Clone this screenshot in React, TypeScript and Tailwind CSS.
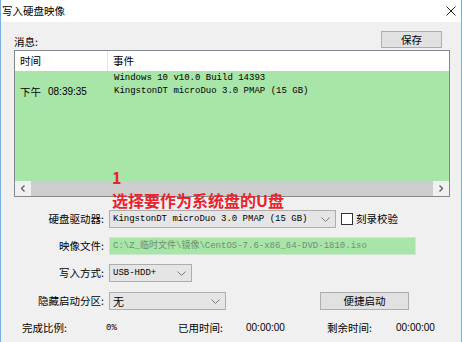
import React from "react";

const Chevron = () => (
  <svg width="9" height="5" viewBox="0 0 9 5" className="shrink-0">
    <path d="M0.5 0.5 L4.5 4.5 L8.5 0.5" fill="none" stroke="#7a7a7a" strokeWidth="1" />
  </svg>
);

function Select({ width, text, mono = true }: { width: string; text: string; mono?: boolean }) {
  return (
    <div
      className={`${width} h-[18px] flex items-center justify-between pl-[3px] pr-[5px] bg-[#e5e5e5] border border-[#adadad]`}
    >
      <span
        className={
          mono
            ? "font-['Liberation_Mono','Noto_Sans_CJK_SC',monospace] text-[9px] text-black whitespace-nowrap"
            : "text-[11px] text-black"
        }
      >
        {text}
      </span>
      <Chevron />
    </div>
  );
}

export default function App() {
  return (
    <div className="w-[462px] h-[342px] flex flex-col bg-[#f0f0f0] border-x border-[#7aaedc] font-['Noto_Sans_CJK_SC',sans-serif] text-[10.5px] leading-[14px] text-black overflow-hidden">
      {/* title bar */}
      <div className="h-[22px] shrink-0 bg-white flex items-center justify-between pl-[1px] pr-[5px]">
        <span className="text-[10.5px]">写入硬盘映像</span>
        <svg width="10" height="10" viewBox="0 0 10 10">
          <path d="M0.5 0.5 L9.5 9.5 M9.5 0.5 L0.5 9.5" stroke="#222" strokeWidth="1" />
        </svg>
      </div>

      {/* body */}
      <div className="relative flex-1 flex flex-col">
        <div className="h-[19px] mt-[9px] ml-[13px] mr-[19px] flex justify-between">
          <span className="self-end pb-[1px]">消息:</span>
          <button className="w-[61px] h-[17px] bg-[#e1e1e1] border border-[#adadad] text-[10.5px] leading-[14px]">
            保存
          </button>
        </div>

        {/* list */}
        <div className="ml-[13px] w-[436px] h-[147px] border border-[#828790] bg-white flex flex-col">
          <div className="h-[20px] flex items-center shrink-0">
            <div className="w-[93px] h-full flex items-center pl-[5px] border-r border-[#e5e5e5]">时间</div>
            <div className="pl-[5px]">事件</div>
          </div>
          <div className="flex-1 bg-[#a8e5a8] flex pt-[1px]">
            <div className="w-[93px] pl-[5px] pt-[13px] h-[26px] flex items-center">
              <span>下午</span>
              <span className="ml-[7px] font-['Liberation_Sans',sans-serif] text-[10px]">08:39:35</span>
            </div>
            <div className="pl-[6px] font-['Liberation_Mono',monospace] text-[9px] leading-[13px] flex flex-col">
              <span>Windows 10 v10.0 Build 14393</span>
              <span>KingstonDT microDuo 3.0 PMAP (15 GB)</span>
            </div>
          </div>
          <div className="h-[15px] shrink-0 flex">
            <div className="w-[16px] bg-[#f0f0f0] flex items-center justify-center">
              <svg width="4" height="7" viewBox="0 0 4 7">
                <path d="M3.5 0.5 L0.5 3.5 L3.5 6.5" fill="none" stroke="#606060" strokeWidth="1.3" />
              </svg>
            </div>
            <div className="flex-1 bg-[#cdcdcd]" />
            <div className="w-[16px] bg-[#f0f0f0] flex items-center justify-center">
              <svg width="4" height="7" viewBox="0 0 4 7">
                <path d="M0.5 0.5 L3.5 3.5 L0.5 6.5" fill="none" stroke="#606060" strokeWidth="1.3" />
              </svg>
            </div>
          </div>
        </div>

        {/* form */}
        <div className="mt-[13px] flex items-center">
          <span className="w-[103px] text-right">硬盘驱动器:</span>
          <div className="ml-[5px]">
            <Select width="w-[227px]" text="KingstonDT microDuo 3.0 PMAP (15 GB)" />
          </div>
          <div className="ml-[5px] w-[12px] h-[12px] bg-white border border-[#333]" />
          <span className="ml-[3px]">刻录校验</span>
        </div>

        <div className="mt-[9px] flex items-center">
          <span className="w-[103px] text-right">映像文件:</span>
          <div className="ml-[5px] w-[307px] h-[18px] flex items-center pl-[3px] bg-[#a8e5a8] border border-[#cfe6cf]">
            <span className="font-['Liberation_Mono','Noto_Sans_CJK_SC',monospace] text-[9px] text-[#6f8f6f] whitespace-nowrap">
              C:\Z_临时文件\镜像\CentOS-7.6-x86_64-DVD-1810.iso
            </span>
          </div>
        </div>

        <div className="mt-[9px] flex items-center">
          <span className="w-[103px] text-right">写入方式:</span>
          <div className="ml-[5px]">
            <Select width="w-[83px]" text="USB-HDD+" />
          </div>
        </div>

        <div className="mt-[10px] flex items-center">
          <span className="w-[103px] text-right">隐藏启动分区:</span>
          <div className="ml-[5px]">
            <Select width="w-[117px]" text="无" mono={false} />
          </div>
          <button className="ml-[94px] w-[89px] h-[18px] bg-[#e1e1e1] border border-[#adadad] text-[10.5px] leading-[14px]">
            便捷启动
          </button>
        </div>

        <div className="mt-[11px] pl-[21px] flex items-center">
          <span className="w-[84px]">完成比例:</span>
          <span className="w-[72px] font-['Liberation_Mono',monospace] text-[9px]">0%</span>
          <span className="w-[68px]">已用时间:</span>
          <span className="w-[81px] font-['Liberation_Sans',sans-serif] text-[10px]">00:00:00</span>
          <span className="w-[69px]">剩余时间:</span>
          <span className="font-['Liberation_Sans',sans-serif] text-[10px]">00:00:00</span>
        </div>

        {/* red annotation over the list */}
        <div className="absolute left-[111px] top-[144px] text-[#e8232b] font-bold text-[16px] leading-[23px] flex flex-col">
          <span>1</span>
          <span>选择要作为系统盘的U盘</span>
        </div>
      </div>
    </div>
  );
}
